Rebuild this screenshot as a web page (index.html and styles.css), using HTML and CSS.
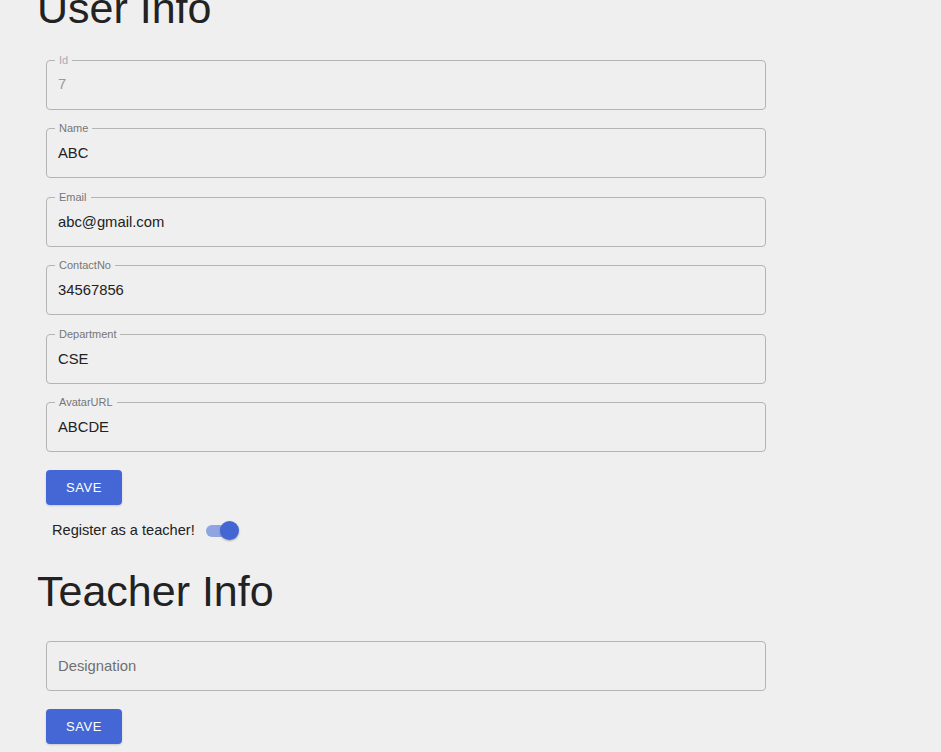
FILE: index.html
```html
<!DOCTYPE html>
<html>
<head>
<meta charset="utf-8">
<link rel="stylesheet" href="styles.css">
</head>
<body>
<div class="page">
  <h1 class="title title-top">User Info</h1>
  <div class="form">
    <div class="field disabled"><span class="label">Id</span><span class="value">7</span></div>
    <div class="field"><span class="label">Name</span><span class="value">ABC</span></div>
    <div class="field"><span class="label">Email</span><span class="value">abc@gmail.com</span></div>
    <div class="field"><span class="label">ContactNo</span><span class="value">34567856</span></div>
    <div class="field"><span class="label">Department</span><span class="value">CSE</span></div>
    <div class="field"><span class="label">AvatarURL</span><span class="value">ABCDE</span></div>
    <div class="actions"><button class="btn">SAVE</button></div>
  </div>
  <div class="switch-row">
    <span class="switch-label">Register as a teacher!</span>
    <span class="switch"><span class="track"></span><span class="thumb"></span></span>
  </div>
  <h1 class="title">Teacher Info</h1>
  <div class="form form-teacher">
    <div class="field"><span class="placeholder">Designation</span></div>
    <div class="actions"><button class="btn">SAVE</button></div>
  </div>
</div>
</body>
</html>
```

FILE: styles.css
```css
* { box-sizing: border-box; }
html, body { margin: 0; padding: 0; background: #efefef; }
body {
  font-family: "Liberation Sans", Arial, sans-serif;
  color: #222;
  overflow: hidden;
  height: 752px;
}
.page {
  padding-left: 37px;
}
.title {
  font-weight: 400;
  font-size: 43px;
  line-height: 50px;
  margin: 0;
  color: #222;
}
.title-top {
  margin-top: -17px;
}
.form {
  padding-left: 9px;
  width: 738px;
  display: flex;
  flex-direction: column;
  gap: 18.4px;
}
.title-top + .form { margin-top: 27px; }
.field {
  position: relative;
  height: 50px;
  width: 720px;
  border: 1px solid #b4b4b4;
  border-radius: 4px;
  display: flex;
  align-items: center;
  padding-left: 11px;
  font-size: 14.8px;
}
.label {
  position: absolute;
  top: -8px;
  left: 8px;
  padding: 0 4px;
  background: #efefef;
  font-size: 11px;
  line-height: 14px;
  color: #767676;
}
.value { color: #222; }
.disabled .label { color: #adaab5; }
.disabled .value { color: #9a9a9a; }
.disabled .value { transform: translateY(-1px); }
.placeholder { color: #6f6f6f; }
.actions { display: flex; }
.btn {
  width: 76px;
  height: 35px;
  border: 0;
  border-radius: 4px;
  background: #4467d5;
  color: #fff;
  font-family: "Liberation Sans", Arial, sans-serif;
  font-size: 13px;
  letter-spacing: 0.6px;
  box-shadow: 0 1px 2px rgba(0,0,0,0.15);
  padding: 0;
}
.switch-row {
  display: flex;
  align-items: center;
  padding-left: 15px;
  height: 36px;
  margin-top: 7px;
}
.switch-label {
  font-size: 14.6px;
  color: #222;
}
.switch {
  position: relative;
  width: 34px;
  height: 20px;
  margin-left: 11px;
  display: inline-block;
}
.track {
  position: absolute;
  left: 0;
  top: 5px;
  width: 30px;
  height: 12px;
  border-radius: 6px;
  background: #8fa5e2;
}
.thumb {
  position: absolute;
  left: 14px;
  top: 1px;
  width: 19px;
  height: 19px;
  border-radius: 50%;
  background: #4466d4;
  box-shadow: 0 1px 2px rgba(0,0,0,0.3);
}
.switch-row + .title { margin-top: 18px; }
.form-teacher { margin-top: 25px; gap: 18px; }
```
